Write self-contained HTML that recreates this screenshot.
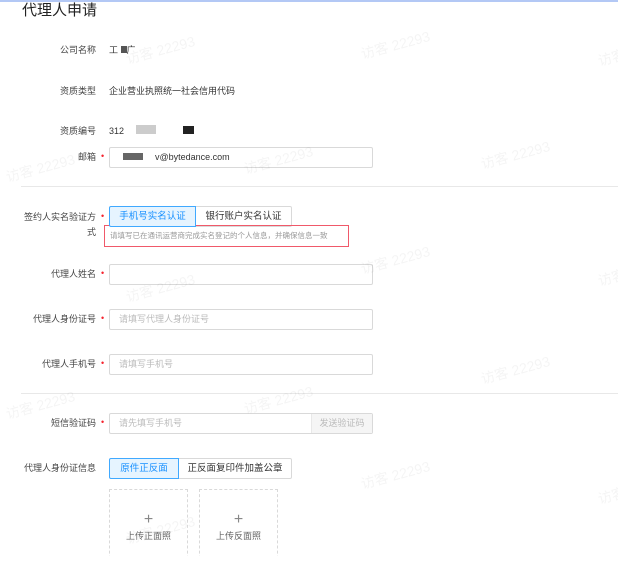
<!DOCTYPE html>
<html><head><meta charset="utf-8"><style>
*{margin:0;padding:0;box-sizing:border-box}
body{width:618px;height:578px;overflow:hidden;background:#fff;position:relative;font-family:"Liberation Sans","Noto Sans CJK SC",sans-serif;color:#333;font-size:9px}
.a{position:absolute;white-space:nowrap}
.lbl{position:absolute;right:522px;text-align:right;color:#444;font-size:9px;line-height:12px}
.star{position:absolute;left:101px;color:#f5222d;font-size:9px}
.inp{position:absolute;left:109px;width:264px;height:21px;border:1px solid #d9d9d9;border-radius:2px;padding-left:9px;line-height:19px;color:#bbb;font-size:9px}
.hr{position:absolute;left:21px;right:0;height:1px;background:#e8e8e8}
.btn{position:absolute;height:21px;border:1px solid #d9d9d9;line-height:19px;text-align:center;font-size:9.5px;color:#333}
.on{background:#e6f4ff;border-color:#40a9ff;color:#1890ff;z-index:2}
.up{position:absolute;top:489px;width:79px;height:80px;border:1px dashed #d9d9d9;text-align:center;color:#666}
.wm{position:absolute;font-size:14px;color:rgba(0,0,0,0.045);transform:rotate(-15deg);white-space:nowrap}
</style></head><body>
<div class="a" style="left:0;top:0;width:618px;height:2px;background:#b3c8f5"></div>
<div class="a" style="left:22px;top:1px;font-size:15px;color:#222;line-height:20px">代理人申请</div>

<div class="lbl" style="top:44px">公司名称</div>
<div class="a" style="left:109px;top:44px;line-height:12px">工 <span style="display:inline-block;width:6px;height:7px;background:#555"></span>广</div>
<div class="lbl" style="top:85px">资质类型</div>
<div class="a" style="left:109px;top:85px;line-height:12px;color:#333">企业营业执照统一社会信用代码</div>
<div class="lbl" style="top:125px">资质编号</div>
<div class="a" style="left:109px;top:125px;line-height:12px">312</div>
<div class="a" style="left:136px;top:125px;width:20px;height:9px;background:#ccc"></div>
<div class="a" style="left:183px;top:126px;width:11px;height:8px;background:#222"></div>
<div class="lbl" style="top:151px">邮箱</div><div class="star" style="top:151px">•</div>
<div class="inp" style="top:147px;color:#333"><span style="display:inline-block;width:20px;height:7px;background:#666;margin:0 12px 0 4px"></span>v@bytedance.com</div>
<div class="hr" style="top:186px"></div>

<div class="lbl" style="top:210px;line-height:15px;width:80px">签约人实名验证方<br>式</div>
<div class="star" style="top:211px">•</div>
<div class="btn on" style="left:109px;top:206px;width:87px;border-radius:2px 0 0 2px">手机号实名认证</div>
<div class="btn" style="left:195px;top:206px;width:97px;border-radius:0 2px 2px 0">银行账户实名认证</div>
<div class="a" style="left:104px;top:225px;width:245px;height:22px;border:1px solid #f0596a;color:#999;font-size:7.5px;line-height:20px;padding-left:5px">请填写已在通讯运营商完成实名登记的个人信息，并确保信息一致</div>

<div class="lbl" style="top:268px">代理人姓名</div><div class="star" style="top:268px">•</div>
<div class="inp" style="top:264px"></div>
<div class="lbl" style="top:313px">代理人身份证号</div><div class="star" style="top:313px">•</div>
<div class="inp" style="top:309px">请填写代理人身份证号</div>
<div class="lbl" style="top:358px">代理人手机号</div><div class="star" style="top:358px">•</div>
<div class="inp" style="top:354px">请填写手机号</div>
<div class="hr" style="top:393px"></div>

<div class="lbl" style="top:417px">短信验证码</div><div class="star" style="top:417px">•</div>
<div class="inp" style="top:413px">请先填写手机号</div>
<div class="a" style="left:311px;top:414px;width:61px;height:19px;background:#f5f5f5;border-left:1px solid #e8e8e8;color:#bbb;text-align:center;line-height:19px">发送验证码</div>

<div class="lbl" style="top:462px">代理人身份证信息</div>
<div class="btn on" style="left:109px;top:458px;width:70px;border-radius:2px 0 0 2px">原件正反面</div>
<div class="btn" style="left:178px;top:458px;width:114px;border-radius:0 2px 2px 0">正反面复印件加盖公章</div>
<div class="up" style="left:109px"><div style="font-size:16px;line-height:16px;margin-top:22px;color:#888">+</div><div style="line-height:12px;margin-top:2px">上传正面照</div></div>
<div class="up" style="left:199px"><div style="font-size:16px;line-height:16px;margin-top:22px;color:#888">+</div><div style="line-height:12px;margin-top:2px">上传反面照</div></div>
<div class="a" style="left:0;top:556px;width:618px;height:22px;background:#fff;z-index:3"></div>

<div class="wm" style="left:125px;top:40px">访客 22293</div>
<div class="wm" style="left:360px;top:35px">访客 22293</div>
<div class="wm" style="left:597px;top:42px">访客 22293</div>
<div class="wm" style="left:5px;top:158px">访客 22293</div>
<div class="wm" style="left:243px;top:150px">访客 22293</div>
<div class="wm" style="left:480px;top:145px">访客 22293</div>
<div class="wm" style="left:125px;top:278px">访客 22293</div>
<div class="wm" style="left:360px;top:250px">访客 22293</div>
<div class="wm" style="left:597px;top:262px">访客 22293</div>
<div class="wm" style="left:5px;top:395px">访客 22293</div>
<div class="wm" style="left:243px;top:390px">访客 22293</div>
<div class="wm" style="left:480px;top:360px">访客 22293</div>
<div class="wm" style="left:125px;top:520px">访客 22293</div>
<div class="wm" style="left:360px;top:465px">访客 22293</div>
<div class="wm" style="left:597px;top:480px">访客 22293</div>
</body></html>
